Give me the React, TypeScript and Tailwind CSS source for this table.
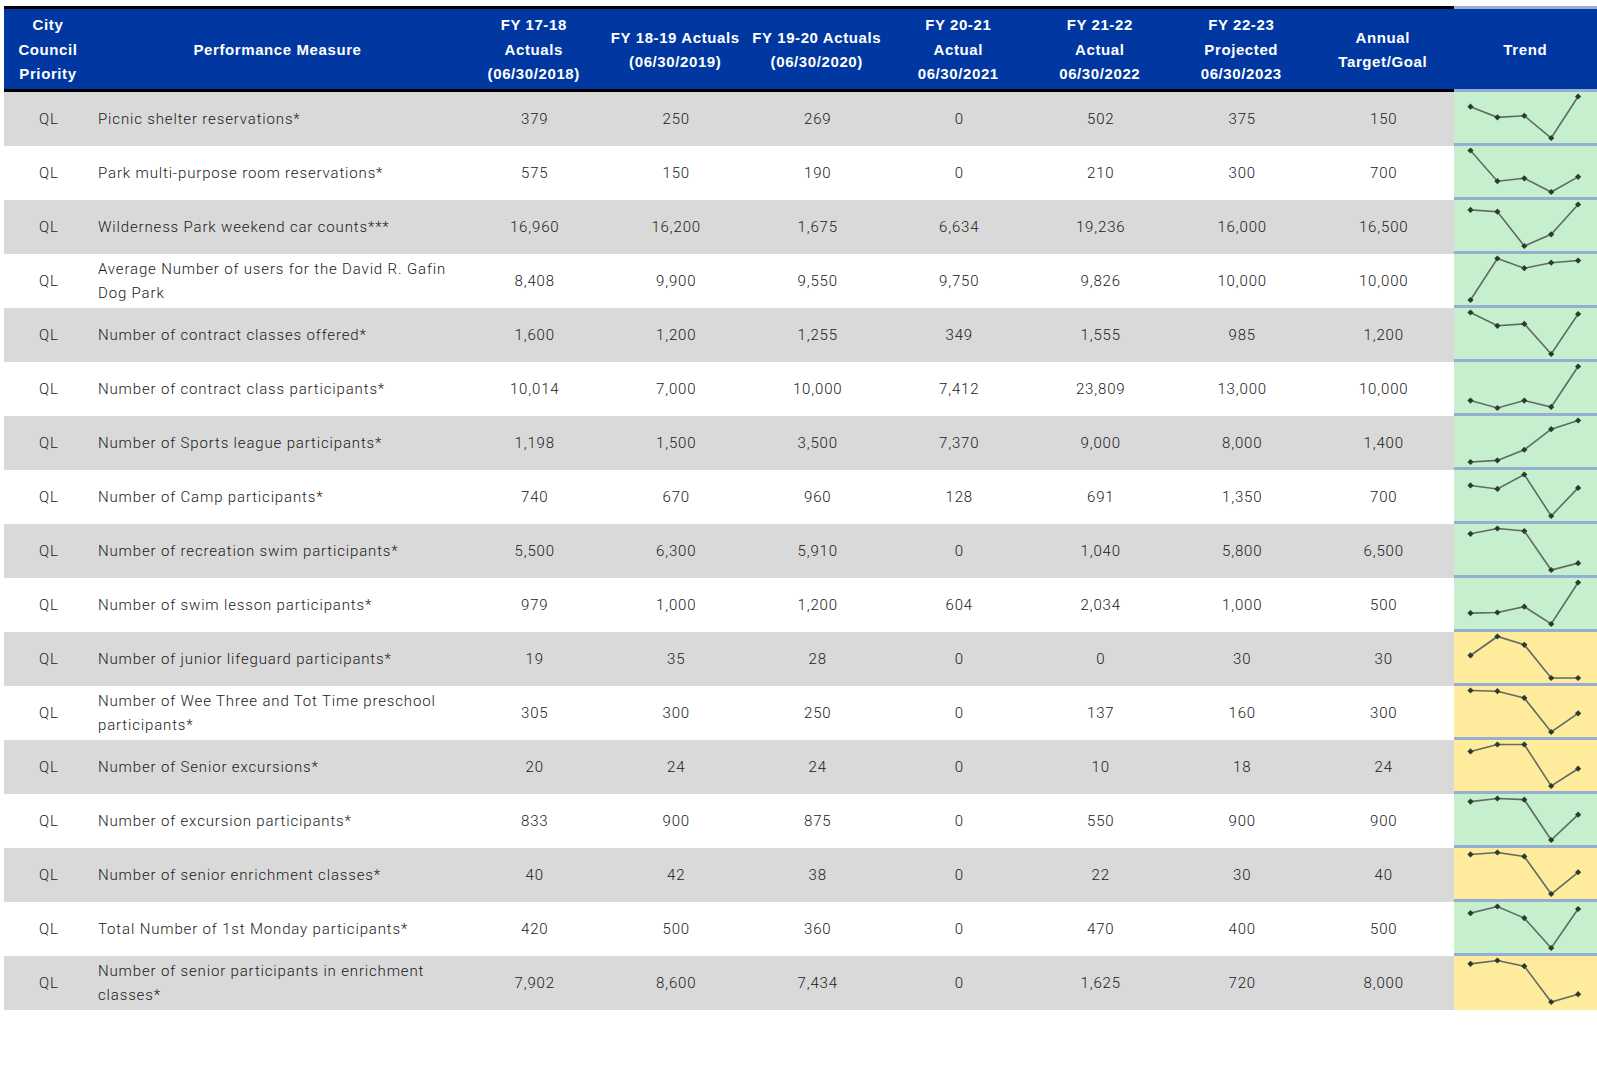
import React from 'react';

type Row = {
  measure: string;
  values: string[];
  tone: 'green' | 'yellow';
};

const rows: Row[] = [
  { measure: 'Picnic shelter reservations*', values: ['379', '250', '269', '0', '502', '375', '150'], tone: 'green' },
  { measure: 'Park multi-purpose room reservations*', values: ['575', '150', '190', '0', '210', '300', '700'], tone: 'green' },
  { measure: 'Wilderness Park weekend car counts***', values: ['16,960', '16,200', '1,675', '6,634', '19,236', '16,000', '16,500'], tone: 'green' },
  { measure: 'Average Number of users for the David R. Gafin\nDog Park', values: ['8,408', '9,900', '9,550', '9,750', '9,826', '10,000', '10,000'], tone: 'green' },
  { measure: 'Number of contract classes offered*', values: ['1,600', '1,200', '1,255', '349', '1,555', '985', '1,200'], tone: 'green' },
  { measure: 'Number of contract class participants*', values: ['10,014', '7,000', '10,000', '7,412', '23,809', '13,000', '10,000'], tone: 'green' },
  { measure: 'Number of Sports league participants*', values: ['1,198', '1,500', '3,500', '7,370', '9,000', '8,000', '1,400'], tone: 'green' },
  { measure: 'Number of Camp participants*', values: ['740', '670', '960', '128', '691', '1,350', '700'], tone: 'green' },
  { measure: 'Number of recreation swim participants*', values: ['5,500', '6,300', '5,910', '0', '1,040', '5,800', '6,500'], tone: 'green' },
  { measure: 'Number of swim lesson participants*', values: ['979', '1,000', '1,200', '604', '2,034', '1,000', '500'], tone: 'green' },
  { measure: 'Number of junior lifeguard participants*', values: ['19', '35', '28', '0', '0', '30', '30'], tone: 'yellow' },
  { measure: 'Number of Wee Three and Tot Time preschool\nparticipants*', values: ['305', '300', '250', '0', '137', '160', '300'], tone: 'yellow' },
  { measure: 'Number of Senior excursions*', values: ['20', '24', '24', '0', '10', '18', '24'], tone: 'yellow' },
  { measure: 'Number of excursion participants*', values: ['833', '900', '875', '0', '550', '900', '900'], tone: 'green' },
  { measure: 'Number of senior enrichment classes*', values: ['40', '42', '38', '0', '22', '30', '40'], tone: 'yellow' },
  { measure: 'Total Number of 1st Monday participants*', values: ['420', '500', '360', '0', '470', '400', '500'], tone: 'green' },
  { measure: 'Number of senior participants in enrichment\nclasses*', values: ['7,902', '8,600', '7,434', '0', '1,625', '720', '8,000'], tone: 'yellow' },
];

const headers = [
  'FY 17-18\nActuals\n(06/30/2018)',
  'FY 18-19 Actuals\n(06/30/2019)',
  'FY 19-20 Actuals\n(06/30/2020)',
  'FY 20-21\nActual\n06/30/2021',
  'FY 21-22\nActual\n06/30/2022',
  'FY 22-23\nProjected\n06/30/2023',
  'Annual\nTarget/Goal',
];

const cols = 'grid grid-cols-[88px_371px_repeat(7,141.5px)_1fr]';

function Sparkline({ values }: { values: string[] }) {
  // first five years only, scaled per row
  const nums = values.slice(0, 5).map((v) => Number(v.replace(/,/g, '')));
  const min = Math.min(...nums);
  const max = Math.max(...nums);
  const span = max - min || 1;
  const pts = nums.map((n, i) => [16.5 + i * 26.9, 46 - ((n - min) / span) * 41.5]);
  return (
    <svg width="144" height="51" viewBox="0 0 144 51" className="block">
      <polyline
        points={pts.map((p) => p.join(',')).join(' ')}
        fill="none"
        stroke="#5f6b62"
        strokeWidth="1.6"
      />
      {pts.map(([x, y], i) => (
        <rect
          key={i}
          x={x - 2.2}
          y={y - 2.2}
          width="4.4"
          height="4.4"
          fill="#2d3a30"
          transform={`rotate(45 ${x} ${y})`}
        />
      ))}
    </svg>
  );
}

export default function App() {
  return (
    <div className="w-[1597px] h-[1082px] bg-white pt-[6px] pl-[4px] font-['Roboto',sans-serif] overflow-hidden">
      {/* header */}
      <div className={`${cols} h-[86px] text-white font-bold text-[15px] leading-[24.5px] tracking-[0.6px] font-['Liberation_Sans',sans-serif]`}>
        <div className="bg-[#0037a0] border-t-[3px] border-b-[3px] border-black flex items-center justify-center text-center whitespace-pre-line pt-[2px]">
          {'City\nCouncil\nPriority'}
        </div>
        <div className="bg-[#0037a0] border-t-[3px] border-b-[3px] border-black flex items-center justify-center text-center pt-[2px]">
          Performance Measure
        </div>
        {headers.map((h) => (
          <div
            key={h}
            className="bg-[#0037a0] border-t-[3px] border-b-[3px] border-black flex items-center justify-center text-center whitespace-pre pt-[2px]"
          >
            {h}
          </div>
        ))}
        <div className="bg-[#0037a0] border-t-[3px] border-b-[3px] border-[#95afd2] flex items-center justify-center pt-[2px]">
          Trend
        </div>
      </div>

      {/* rows */}
      {rows.map((r, i) => {
        const stripe = i % 2 === 0 ? 'bg-[#d9d9d9]' : 'bg-white';
        const last = i === rows.length - 1;
        return (
          <div key={r.measure} className={`${cols} h-[54px] text-[15px] font-light text-[#1a1a1a] tracking-[0.85px]`}>
            <div className={`${stripe} flex items-center justify-center pl-[2px]`}>QL</div>
            <div className={`${stripe} flex items-center pl-[6px] leading-[24.5px] whitespace-pre-line`}>
              {r.measure}
            </div>
            {r.values.map((v, j) => (
              <div key={j} className={`${stripe} flex items-center justify-center pl-[2px]`}>
                {v}
              </div>
            ))}
            <div
              className={`${r.tone === 'green' ? 'bg-[#c6efce]' : 'bg-[#ffeb9c]'} ${last ? '' : 'border-b-[3px] border-[#95afd2]'}`}
            >
              <Sparkline values={r.values} />
            </div>
          </div>
        );
      })}
    </div>
  );
}
